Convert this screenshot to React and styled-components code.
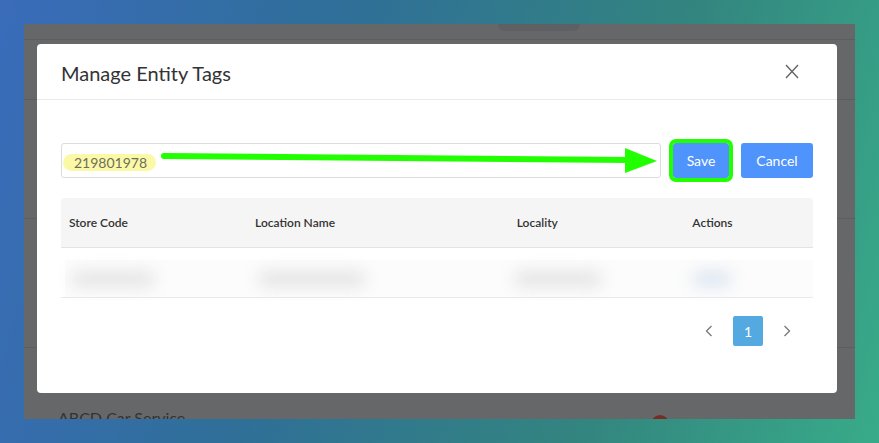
import styled, { createGlobalStyle } from 'styled-components'

const font = "Lato, 'Noto Sans', sans-serif";

const GlobalStyle = createGlobalStyle`
    html, body {
        margin: 0;
        padding: 0;
    }
    body {
        font-family: ${font};
    }
`

const columns = [
    { title: "Store Code", width: 186 },
    { title: "Location Name", width: 265 },
    { title: "Locality", width: 175 },
    { title: "Actions", width: 126 },
];

const blurred = [
    { left: 6, width: 84 },
    { left: 8, width: 108 },
    { left: 0, width: 88 },
    { left: 4, width: 40, tint: "#dde6f1" },
];

function App() {
    return (
        <>
            <GlobalStyle />
            <Page>
                <Screen>
                    <Behind>
                        <TopTab />
                        <BehindRow height={16} />
                        <BehindRow height={60} />
                        <BehindRow height={119} />
                        <BehindRow height={129} />
                        <BehindLast>
                            <BehindText>ABCD Car Service</BehindText>
                            <RedDot />
                        </BehindLast>
                    </Behind>

                    <Modal>
                        <Header>
                            <Title>Manage Entity Tags</Title>
                            <Close>
                                <svg width="14" height="15" viewBox="0 0 14 15">
                                    <path d="M1 1 L13 14 M13 1 L1 14" stroke="#666" strokeWidth="1.4" fill="none" />
                                </svg>
                            </Close>
                        </Header>
                        <Body>
                            <InputRow>
                                <TagInput>
                                    <Highlight>219801978</Highlight>
                                </TagInput>
                                <Button width={56} highlighted>Save</Button>
                                <Button width={72}>Cancel</Button>
                                <Arrow width="520" height="30" viewBox="0 0 520 30">
                                    <path d="M5 9 L470 13" stroke="#22ff00" strokeWidth="6" strokeLinecap="round" fill="none" />
                                    <polygon points="466,1 466,26 498,14" fill="#22ff00" />
                                </Arrow>
                            </InputRow>

                            <Table>
                                <HeadRow>
                                    {columns.map((c) => (
                                        <HeadCell key={c.title} width={c.width}>{c.title}</HeadCell>
                                    ))}
                                </HeadRow>
                                <BodyRow>
                                    {columns.map((c, i) => (
                                        <Cell key={c.title} width={c.width}>
                                            <Blur style={{ marginLeft: blurred[i].left, width: blurred[i].width }} tint={blurred[i].tint} />
                                        </Cell>
                                    ))}
                                </BodyRow>
                            </Table>

                            <Pager>
                                <Chevron>
                                    <svg width="8" height="12" viewBox="0 0 8 12">
                                        <path d="M6.5 1 L1.5 6 L6.5 11" stroke="#777" strokeWidth="1.3" fill="none" />
                                    </svg>
                                </Chevron>
                                <PageNum>1</PageNum>
                                <Chevron>
                                    <svg width="8" height="12" viewBox="0 0 8 12">
                                        <path d="M1.5 1 L6.5 6 L1.5 11" stroke="#777" strokeWidth="1.3" fill="none" />
                                    </svg>
                                </Chevron>
                            </Pager>
                        </Body>
                    </Modal>
                </Screen>
            </Page>
        </>
    )
}

const Page = styled.div`
    width: 879px;
    height: 443px;
    box-sizing: border-box;
    padding: 24px 24px 24px 24px;
    background: linear-gradient(105deg, #3a6cba 0%, #2f6f98 35%, #33857f 70%, #38ab89 100%);
    overflow: hidden;
`

const Screen = styled.div`
    position: relative;
    width: 831px;
    height: 395px;
    background: #666769;
    overflow: hidden;
`

const Behind = styled.div`
    display: flex;
    flex-direction: column;
    height: 100%;
`

const TopTab = styled.div`
    position: absolute;
    top: 0;
    left: 474px;
    width: 82px;
    height: 7px;
    background: #5f6063;
    border-radius: 0 0 8px 8px;
`

const BehindRow = styled.div`
    height: ${(p) => p.height}px;
    flex-shrink: 0;
    border-bottom: 1px solid #5d5e60;
    box-sizing: border-box;
`

const BehindLast = styled.div`
    flex: 1;
    display: flex;
    align-items: flex-end;
    justify-content: space-between;
    padding: 0 186px 0 34px;
`

const BehindText = styled.div`
    font-family: ${font};
    font-size: 16px;
    line-height: 16px;
    color: #333;
    margin-bottom: -7px;
`

const RedDot = styled.div`
    width: 18px;
    height: 18px;
    border-radius: 50%;
    background: #7b2a24;
    margin-bottom: -14px;
`

const Modal = styled.div`
    position: absolute;
    top: 20px;
    left: 13px;
    width: 800px;
    height: 349px;
    background: #fff;
    border-radius: 4px;
    display: flex;
    flex-direction: column;
    font-family: ${font};
`

const Header = styled.div`
    height: 56px;
    box-sizing: border-box;
    border-bottom: 1px solid #e9e9e9;
    display: flex;
    align-items: center;
    justify-content: space-between;
    padding: 0 38px 0 24px;
`

const Title = styled.div`
    font-size: 20px;
    color: #333;
    margin-top: 2px;
`

const Close = styled.div`
    display: flex;
`

const Body = styled.div`
    padding: 43px 24px 0 24px;
    display: flex;
    flex-direction: column;
`

const InputRow = styled.div`
    position: relative;
    display: flex;
    align-items: center;
    gap: 12px;
`

const TagInput = styled.div`
    width: 600px;
    height: 35px;
    box-sizing: border-box;
    border: 1px solid #dcdcdc;
    border-radius: 3px;
    display: flex;
    align-items: center;
    padding-left: 1px;
    padding-top: 3px;
`

const Highlight = styled.span`
    background: #fbf9a6;
    border-radius: 9px;
    padding: 0 9px 0 11px;
    font-size: 14px;
    line-height: 17px;
    color: #6e6e5e;
`

const Button = styled.button`
    font-family: ${font};
    font-size: 14px;
    height: 35px;
    width: ${(p) => p.width}px;
    padding: 0;
    border: none;
    border-radius: 3px;
    background: #4f93fc;
    color: #fff;
    outline: ${(p) => (p.highlighted ? "4px solid #22ff00" : "none")};
`

const Arrow = styled.svg`
    position: absolute;
    left: 98px;
    top: 4px;
    overflow: visible;
`

const Table = styled.div`
    margin-top: 20px;
    width: 752px;
`

const HeadRow = styled.div`
    display: flex;
    height: 50px;
    background: #f5f5f5;
    border-radius: 4px 4px 0 0;
    border-bottom: 1px solid #e3e3e3;
    box-sizing: border-box;
`

const HeadCell = styled.div`
    width: ${(p) => p.width}px;
    padding-left: 8px;
    display: flex;
    align-items: center;
    font-size: 12px;
    font-weight: 600;
    color: #333;
`

const BodyRow = styled.div`
    display: flex;
    height: 50px;
    border-bottom: 1px solid #eaeaea;
    box-sizing: border-box;
    padding: 12px 0 0 4px;
`

const Cell = styled.div`
    width: ${(p) => p.width}px;
    display: flex;
    align-items: center;
    background: #fcfcfc;
`

const Blur = styled.div`
    height: 16px;
    border-radius: 8px;
    background: ${(p) => p.tint || "#e4e4e4"};
    filter: blur(8px);
`

const Pager = styled.div`
    display: flex;
    justify-content: flex-end;
    align-items: center;
    gap: 18px;
    margin-top: 18px;
    padding-right: 20px;
`

const Chevron = styled.div`
    width: 12px;
    display: flex;
    justify-content: center;
`

const PageNum = styled.div`
    width: 30px;
    height: 30px;
    border-radius: 2px;
    background: #55a9e1;
    color: #fff;
    font-size: 14px;
    display: flex;
    align-items: center;
    justify-content: center;
`

export default App;
